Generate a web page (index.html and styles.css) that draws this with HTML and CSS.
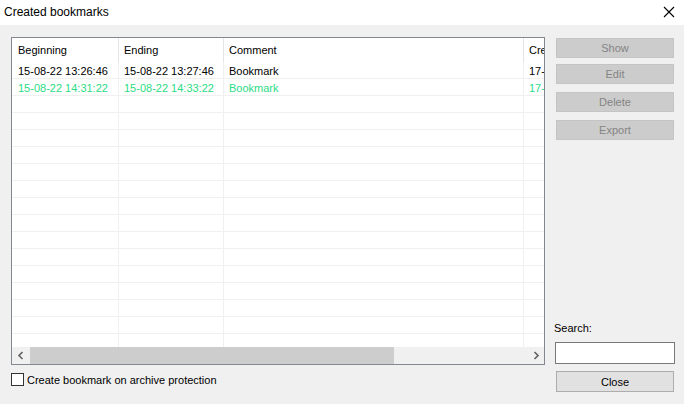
FILE: index.html
```html
<!DOCTYPE html>
<html lang="en">
<head>
    <meta charset="UTF-8">
    <title>Created bookmarks</title>
    <link rel="stylesheet" href="styles.css">
</head>
<body>
    <div class="titlebar">
        <span class="title">Created bookmarks</span>
        <svg class="close-x" width="12" height="12" viewBox="0 0 12 12">
            <path d="M1 1 L11 11 M11 1 L1 11" stroke="#000" stroke-width="1.1" fill="none"/>
        </svg>
    </div>

    <div class="dialog">
        <div class="left">
            <div class="list">
                <div class="list-body">
                    <table class="grid">
                        <thead>
                            <tr>
                                <th class="c1">Beginning</th>
                                <th class="c2">Ending</th>
                                <th class="c3">Comment</th>
                                <th class="c4">Created</th>
                            </tr>
                        </thead>
                        <tbody id="rows">
                            <tr>
                                <td>15-08-22 13:26:46</td>
                                <td>15-08-22 13:27:46</td>
                                <td>Bookmark</td>
                                <td>17-08-22 10:12:05</td>
                            </tr>
                            <tr class="auto">
                                <td>15-08-22 14:31:22</td>
                                <td>15-08-22 14:33:22</td>
                                <td>Bookmark</td>
                                <td>17-08-22 10:14:40</td>
                            </tr>
                            <tr><td></td><td></td><td></td><td></td></tr>
                            <tr><td></td><td></td><td></td><td></td></tr>
                            <tr><td></td><td></td><td></td><td></td></tr>
                            <tr><td></td><td></td><td></td><td></td></tr>
                            <tr><td></td><td></td><td></td><td></td></tr>
                            <tr><td></td><td></td><td></td><td></td></tr>
                            <tr><td></td><td></td><td></td><td></td></tr>
                            <tr><td></td><td></td><td></td><td></td></tr>
                            <tr><td></td><td></td><td></td><td></td></tr>
                            <tr><td></td><td></td><td></td><td></td></tr>
                            <tr><td></td><td></td><td></td><td></td></tr>
                            <tr><td></td><td></td><td></td><td></td></tr>
                            <tr><td></td><td></td><td></td><td></td></tr>
                            <tr><td></td><td></td><td></td><td></td></tr>
                            <tr><td></td><td></td><td></td><td></td></tr>
                            <tr><td></td><td></td><td></td><td></td></tr>
                        </tbody>
                    </table>
                </div>
                <div class="hscroll">
                    <div class="arrow">
                        <svg width="8" height="9" viewBox="0 0 8 9"><path d="M5.5 1 L2 4.5 L5.5 8" stroke="#606060" stroke-width="1.6" fill="none"/></svg>
                    </div>
                    <div class="thumb"></div>
                    <div class="track"></div>
                    <div class="arrow">
                        <svg width="8" height="9" viewBox="0 0 8 9"><path d="M2.5 1 L6 4.5 L2.5 8" stroke="#606060" stroke-width="1.6" fill="none"/></svg>
                    </div>
                </div>
            </div>
            <label class="check">
                <span class="box"></span>
                Create bookmark on archive protection
            </label>
        </div>

        <div class="right">
            <button class="btn show" disabled>Show</button>
            <button class="btn edit" disabled>Edit</button>
            <button class="btn delete" disabled>Delete</button>
            <button class="btn export" disabled>Export</button>
            <div class="spacer"></div>
            <div class="search-label">Search:</div>
            <input class="search" type="text">
            <button class="btn close">Close</button>
        </div>
    </div>
</body>
</html>
```

FILE: styles.css
```css
:root {
    --bg: #f0f0f0;
    --border: #828790;
    --grid-line: #f0f0f0;
    --auto-color: #2bdc84;
    --disabled-bg: #cccccc;
    --disabled-text: #848484;
}

html, body {
    margin: 0;
    padding: 0;
    width: 684px;
    height: 404px;
    overflow: hidden;
    background-color: var(--bg);
    font-family: 'Liberation Sans', Arial, sans-serif;
    font-size: 11px;
    color: #000;
}

.titlebar {
    height: 25px;
    background-color: #fff;
    display: flex;
    align-items: center;
    justify-content: space-between;
    padding: 0 9px 0 4px;
}

.title {
    font-size: 12px;
    margin-top: -2px;
}

.close-x {
    margin-top: -1px;
}

.dialog {
    display: flex;
    padding: 12px 0 0 11px;
}

.left {
    width: 534px;
}

.list {
    height: 328px;
    box-sizing: border-box;
    border: 1px solid var(--border);
    background-color: #fff;
    display: flex;
    flex-direction: column;
}

.list-body {
    flex: 1;
    overflow: hidden;
}

.grid {
    border-collapse: collapse;
    table-layout: fixed;
    width: 531px;
}

.grid th {
    height: 24px;
    padding: 0 0 0 6px;
    text-align: left;
    font-weight: normal;
    border-right: 1px solid #e5e5e5;
    white-space: nowrap;
    overflow: hidden;
}

.grid td {
    height: 14px;
    padding: 2px 0 0 6px;
    border-right: 1px solid var(--grid-line);
    border-bottom: 1px solid var(--grid-line);
    white-space: nowrap;
    overflow: hidden;
}

.grid th.c2, .grid th.c3, .grid th.c4 {
    padding-left: 5px;
}

.grid td:nth-child(n+2) {
    padding-left: 5px;
}

.grid th.c4, .grid td:nth-child(4) {
    border-right: none;
}

.c1 { width: 100px; }
.c2 { width: 99px; }
.c3 { width: 294px; }
.c4 { width: 15px; }

.grid tr.auto td {
    color: var(--auto-color);
}

.hscroll {
    height: 17px;
    display: flex;
    background-color: var(--bg);
}

.arrow {
    width: 17px;
    display: flex;
    align-items: center;
    justify-content: center;
}

.thumb {
    width: 364px;
    margin-left: 1px;
    background-color: #cdcdcd;
}

.track {
    flex: 1;
}

.check {
    display: flex;
    align-items: center;
    margin-top: 8px;
    gap: 3px;
}

.box {
    width: 11px;
    height: 11px;
    border: 1px solid #333;
    background-color: #fff;
}

.right {
    width: 119px;
    margin-left: 10px;
    height: 355px;
    display: flex;
    flex-direction: column;
}

.btn {
    font-family: inherit;
    font-size: 11px;
    width: 118px;
    height: 20px;
    padding: 0;
    box-sizing: border-box;
    margin-left: 1px;
}

.btn:disabled {
    background-color: var(--disabled-bg);
    border: 1px solid #c4c4c4;
    color: var(--disabled-text);
}

.show { margin-top: 1px; }
.edit { margin-top: 6px; }
.delete { margin-top: 8px; }
.export { margin-top: 8px; }

.spacer {
    flex: 1;
}

.search-label {
    margin-bottom: 8px;
    margin-left: -1px;
}

.search {
    width: 120px;
    height: 22px;
    box-sizing: border-box;
    border: 1px solid #7a7a7a;
    background-color: #fff;
    margin: 0;
}

.btn.close {
    margin-top: 7px;
    height: 21px;
    background-color: #e1e1e1;
    border: 1px solid #adadad;
    color: #000;
}
```
